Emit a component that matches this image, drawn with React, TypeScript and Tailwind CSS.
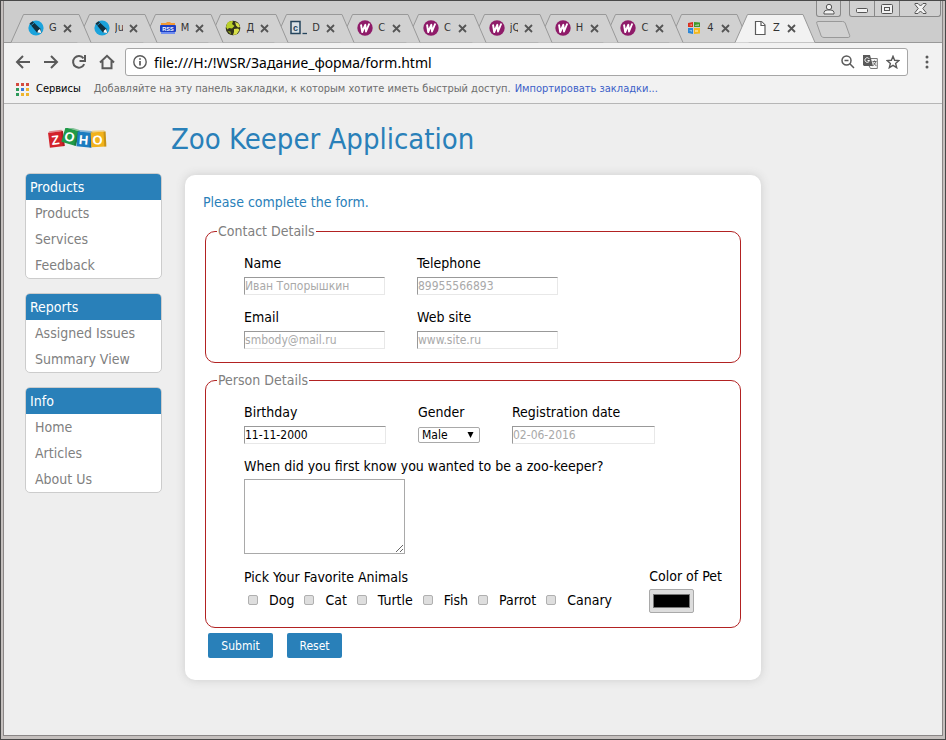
import type { ReactNode } from "react";

const CROSS = "M1 1L8 8M8 1L1 8";

function PenIcon() {
  return (
    <svg width="16" height="16" viewBox="0 0 16 16">
      <circle cx="8" cy="8" r="7.6" fill="#1ba3dc" />
      <path d="M1.5 3.6l3-2.4 8 7.6 1 4.2-4.600-.6z" fill="#12303f" />
      <path d="M10 10.600l2-1.600 1.300 3.900-3.900-.5z" fill="#fff" />
      <path d="M3.200 5.400l2.800-2.300" stroke="#1ba3dc" strokeWidth=".8" />
    </svg>
  );
}

function RssIcon() {
  return (
    <svg width="16" height="16" viewBox="0 0 16 16">
      <path d="M1 5V3h5l1-1h3l1 1h4v2z" fill="#f39a33" />
      <rect x="0" y="5" width="16" height="7" rx="1" fill="#1b3fc4" />
      <rect x="1" y="12" width="14" height="2" fill="#6f8df0" />
      <text x="8" y="10.600" textAnchor="middle" fontSize="5.500" fontWeight="700" fill="#fff" fontFamily="Liberation Sans">RSS</text>
    </svg>
  );
}

function GlobeIcon() {
  return (
    <svg width="16" height="16" viewBox="0 0 16 16">
      <circle cx="8" cy="8" r="7.300" fill="#33331c" />
      <path d="M2 3.500C4 1 7 .5 8 1.500L7 4 9.500 6 7 8.500 4 8 2.500 9.500 1 7z" fill="#b9cf2a" />
      <path d="M10 2l3.500 1.500L15 7l-2 .5-2-2zM9 9l4-.5 1.500 1.500-3 4.500L8 15l1-3z" fill="#d8e04a" />
      <path d="M2.500 11l3 .5.5 3z" fill="#8fa51e" />
    </svg>
  );
}

function CodeIcon() {
  return (
    <svg width="18" height="16" viewBox="0 0 18 16">
      <rect x="1" y="1.500" width="9" height="12" fill="#d9e1e6" stroke="#25445c" strokeWidth="1.500" />
      <text x="5.500" y="11" textAnchor="middle" fontSize="9" fontWeight="700" fill="#25445c" fontFamily="Liberation Sans">c</text>
      <path d="M12.500 13.500H17" stroke="#25445c" strokeWidth="1.300" />
    </svg>
  );
}

function WIcon() {
  return (
    <svg width="16" height="16" viewBox="0 0 16 16">
      <circle cx="8" cy="8" r="7.700" fill="#8f1b69" />
      <path d="M4 4.500L5.200 12 8.300 4.800 9 11.500 12.300 3.500" fill="none" stroke="#fff" strokeWidth="1.900" strokeLinejoin="round" />
    </svg>
  );
}

function SquaresIcon() {
  return (
    <svg width="14" height="14" viewBox="0 0 14 14">
      <path d="M1 2l5-1v5H1z" fill="#d9301f" />
      <path d="M7 1l6 .5V6H7z" fill="#3f9a2b" />
      <path d="M1 7h5v6l-5-1z" fill="#2c86d6" />
      <path d="M7 7h6v5.500L7 13z" fill="#f3b81d" />
      <path d="M2 4l3-1v2zM8 4l4-1v2H8zM2 9h3v2zM8 9h3v2H8z" fill="#fff" opacity=".45" />
    </svg>
  );
}

function FileIcon() {
  return (
    <svg width="16" height="16" viewBox="0 0 16 16" fill="#fff" stroke="#5a5a5a" strokeWidth="1.200">
      <path d="M3.500 1.500h6l3.500 3.500v9.500H3.500z" />
      <path d="M9 1.500v4h4" />
    </svg>
  );
}

const tabs: { label: string; icon: ReactNode; active?: boolean }[] = [
  { label: "G", icon: <PenIcon /> },
  { label: "Ju", icon: <PenIcon /> },
  { label: "M", icon: <RssIcon /> },
  { label: "Д", icon: <GlobeIcon /> },
  { label: "D", icon: <CodeIcon /> },
  { label: "C", icon: <WIcon /> },
  { label: "C", icon: <WIcon /> },
  { label: "jQ", icon: <WIcon /> },
  { label: "H", icon: <WIcon /> },
  { label: "C", icon: <WIcon /> },
  { label: "4", icon: <SquaresIcon /> },
  { label: "Z", icon: <FileIcon />, active: true },
];

function TabStrip() {
  return (
    <header className="relative flex h-[42px] items-end border-b border-[#999] bg-[#ccc] pr-[91px] pl-[7px]">
      <div className="flex h-7 min-w-0 flex-1">
        {tabs.map((tab, i) => (
          <div
            key={i}
            className="relative flex min-w-0 flex-1 items-center pl-4"
            style={{ zIndex: tab.active ? 20 : 12 - i }}
          >
            <svg className="absolute top-0 left-0 overflow-visible" width="80" height="29" viewBox="0 0 80 29">
              <path d="M0 28.500L12.500 .5H68L80 28.500" fill={tab.active ? "#f2f2f2" : "#d1d1d1"} stroke="#999" />
            </svg>
            <span className="relative flex w-[18px] shrink-0 justify-center">{tab.icon}</span>
            <span className="relative ml-1 w-2 shrink-0 overflow-hidden text-[11px] leading-4 whitespace-nowrap text-[#333]">
              {tab.label}
            </span>
            <button type="button" aria-label="Close tab" className="relative ml-[6px] shrink-0">
              <svg width="9" height="9" viewBox="0 0 9 9" stroke="#555" strokeWidth="1.800">
                <path d={CROSS} />
              </svg>
            </button>
          </div>
        ))}
      </div>
      <button type="button" aria-label="New tab" className="mb-1 ml-[15px]">
        <svg width="35" height="17" viewBox="0 0 35 17">
          <path d="M2 .5h24.500q2 0 2.700 1.500l4.500 12.500q.5 2-1.500 2H8q-2 0-2.800-1.500L.8 2.500Q0 .5 2 .5z" fill="#d1d1d1" stroke="#999" />
        </svg>
      </button>
      <div className="absolute top-0 right-px flex h-4 text-[#555]">
        <button type="button" aria-label="Profile" className="mr-2 flex w-[25px] items-center justify-center rounded-b-[3px] border border-t-0 border-[#888] bg-[#d0d0d0]">
          <svg width="12" height="12" viewBox="0 0 12 12" fill="#f2f2f2" stroke="#555">
            <path d="M1 11V9.500Q1 7.500 4 7h4q3 .5 3 2.500V11z" />
            <circle cx="6" cy="4" r="2.700" />
          </svg>
        </button>
        <div className="flex rounded-b-[3px] border border-t-0 border-[#888] bg-[#d0d0d0]">
          <button type="button" aria-label="Minimize" className="flex w-6 items-center justify-center">
            <svg width="12" height="10" viewBox="0 0 12 10" fill="#f2f2f2" stroke="#555">
              <rect x=".5" y="4.500" width="11" height="4" rx="1" />
            </svg>
          </button>
          <button type="button" aria-label="Maximize" className="flex w-[26px] items-center justify-center border-x border-[#888]">
            <svg width="12" height="10" viewBox="0 0 12 10" fill="#f2f2f2" stroke="#555">
              <rect x=".5" y=".5" width="11" height="9" rx="1" />
              <rect x="3.500" y="3.500" width="5" height="3" />
            </svg>
          </button>
          <button type="button" aria-label="Close" className="flex w-10 items-center justify-center">
            <svg width="13" height="11" viewBox="0 0 13 11" fill="#f2f2f2" stroke="#555">
              <path d="M1 .5h3l2.500 2.500L9 .5h3v1L8.800 5.500 12 9.500v1H9L6.500 8 4 10.500H1v-1L4.200 5.500 1 1.500z" />
            </svg>
          </button>
        </div>
      </div>
    </header>
  );
}

const navIcons = [
  { name: "Back", d: "M15 8H2M8 2L2 8l6 6" },
  { name: "Forward", d: "M1 8h13M8 2l6 6-6 6" },
  { name: "Reload", d: "M13.200 10.200A5.800 5.800 0 1 1 12.500 4.300M14 1v6H8.500" },
  { name: "Home", d: "M1 8.500L8 1.800l7 6.700M3.500 7v7.200h9V7" },
];

function Toolbar() {
  return (
    <div className="flex items-center bg-[#f2f2f2] pt-[5px] pr-[13px] pl-[11px]">
      <div className="flex shrink-0 gap-3">
        {navIcons.map((icon) => (
          <button key={icon.name} type="button" aria-label={icon.name}>
            <svg width="16" height="16" viewBox="0 0 16 16" fill="none" stroke="#5a5a5a" strokeWidth="2">
              <path d={icon.d} />
            </svg>
          </button>
        ))}
      </div>
      <div className="ml-[10px] flex h-7 min-w-0 flex-1 items-center rounded-[3px] border border-[#a6a6a6] bg-white px-[7px]">
        <svg width="14" height="14" viewBox="0 0 14 14" fill="none" stroke="#5a5a5a" strokeWidth="1.400">
          <circle cx="7" cy="7" r="6.200" />
          <path d="M7 6v4.500M7 3.300v1.500" strokeWidth="1.700" />
        </svg>
        <input
          aria-label="Address"
          defaultValue="file:///H:/!WSR/Задание_форма/form.html"
          className="ml-[7px] min-w-0 flex-1 bg-transparent font-['Noto_Sans',sans-serif] text-[14px] text-black outline-none"
        />
        <div className="flex items-center gap-2">
          <svg width="14" height="14" viewBox="0 0 14 14" fill="none" stroke="#5a5a5a" strokeWidth="1.500">
            <circle cx="5.500" cy="5.500" r="4.500" />
            <path d="M8.800 8.800L13 13M3.500 5.500h4" />
          </svg>
          <svg width="15" height="14" viewBox="0 0 15 14">
            <path d="M6 3.500h8.300v10H7.500L5 9z" fill="#f7f7f7" stroke="#777" />
            <path d="M0 0h7l3 11H1L0 10z" fill="#5a5a5a" />
            <path d="M6.200 3.800A2.300 2.300 0 1 0 6.500 5.500H4.500" fill="none" stroke="#fff" />
            <path d="M9.500 6.500h4M11.500 5.500v1M12.800 6.500q-.8 3-3 4.300M10.300 7.500l3 3.500" fill="none" stroke="#5a5a5a" strokeWidth=".9" />
          </svg>
          <svg width="14" height="14" viewBox="0 0 14 14" fill="none" stroke="#5a5a5a" strokeWidth="1.400">
            <path d="M7 1.300l1.600 4 4.300.3-3.300 2.800 1.100 4.300L7 10.400l-3.700 2.300 1.100-4.300L1.100 5.600l4.300-.3z" />
          </svg>
        </div>
      </div>
      <button type="button" aria-label="Menu" className="ml-[17px]">
        <svg width="4" height="14" viewBox="0 0 4 14" fill="#5a5a5a">
          <circle cx="2" cy="2" r="1.500" />
          <circle cx="2" cy="7" r="1.500" />
          <circle cx="2" cy="12" r="1.500" />
        </svg>
      </button>
    </div>
  );
}

const dots = ["#d44b3f", "#d44b3f", "#d44b3f", "#2e9a5b", "#3b78d8", "#eeb52e", "#2e9a5b", "#eeb52e", "#eeb52e"];

function BookmarksBar() {
  return (
    <div className="flex h-7 items-center border-b border-[#b6b6b6] bg-[#f2f2f2] pl-3 text-[11px] whitespace-nowrap">
      <svg width="13" height="13" viewBox="0 0 13 13">
        {dots.map((color, i) => (
          <rect key={i} x={(i % 3) * 5} y={Math.floor(i / 3) * 5} width="3" height="3" fill={color} />
        ))}
      </svg>
      <span className="ml-[7px] text-black">Сервисы</span>
      <span className="ml-[13px] text-[#6e6e6e]">
        Добавляйте на эту панель закладки, к которым хотите иметь быстрый доступ.
      </span>
      <a href="#import" className="ml-1 text-[#3c5fc8]">
        Импортировать закладки...
      </a>
    </div>
  );
}

function Logo() {
  const tiles = [
    { ch: "Z", x: 8, y: 12, fill: "#d3222a", turn: -7 },
    { ch: "O", x: 22, y: 9, fill: "#1f9a48", turn: 16 },
    { ch: "H", x: 36, y: 12, fill: "#1c7cc0", turn: 5 },
    { ch: "O", x: 50, y: 12, fill: "#f2b21b", turn: -3 },
  ];
  return (
    <svg width="59" height="21" viewBox="0 0 59 21" role="img" aria-label="Zoho">
      {tiles.map((t, i) => (
        <g key={i} transform={`translate(${t.x} ${t.y}) rotate(${t.turn})`}>
          <rect x="-7" y="-8" width="15" height="15" fill={t.fill} />
          <path d="M-7-8h15l-1.500-1.500h-12z" fill={t.fill} opacity=".5" />
          <path d="M6-8h2v15H6z" fill="#000" opacity=".18" />
          <text x="-.5" y="4.500" textAnchor="middle" fontSize="13" fontWeight="700" fill="#fff" fontFamily="Liberation Sans">{t.ch}</text>
        </g>
      ))}
    </svg>
  );
}

const menus = [
  { title: "Products", links: ["Products", "Services", "Feedback"] },
  { title: "Reports", links: ["Assigned Issues", "Summary View"] },
  { title: "Info", links: ["Home", "Articles", "About Us"] },
];

function Sidebar() {
  return (
    <nav className="flex w-[137px] shrink-0 flex-col gap-[14px]">
      {menus.map((menu) => (
        <section key={menu.title} className="overflow-hidden rounded-[5px] border border-[#ccc] bg-white">
          <h2 className="bg-[#2980b9] pl-1 leading-[26px] text-white">{menu.title}</h2>
          <ul>
            {menu.links.map((link) => (
              <li key={link}>
                <a href={`#${link}`} className="block pl-[9px] leading-[26px] text-[#808080]">
                  {link}
                </a>
              </li>
            ))}
          </ul>
        </section>
      ))}
    </nav>
  );
}

function Field({ id, label, width, placeholder, value }: {
  id: string; label: string; width: string; placeholder?: string; value?: string;
}) {
  return (
    <div className={`flex flex-col gap-1 ${width}`}>
      <label htmlFor={id}>{label}</label>
      <input
        id={id}
        defaultValue={value}
        placeholder={placeholder}
        className="h-[18px] w-full border border-[#e8e8e8] border-t-[#999] border-l-[#999] bg-white text-[12px] leading-4 outline-none placeholder:text-[#a9a9a9]"
      />
    </div>
  );
}

const fieldset = "mx-0.5 rounded-[10px] border border-[#b22222] pl-[38px]";
const legend = "-ml-[27px] px-px leading-5 text-[#808080]";
const formButton = "h-[25px] rounded-[2px] bg-[#2980b9] text-[12px] text-white";

function KeeperForm() {
  return (
    <form className="mt-0.5 w-full max-w-[576px] rounded-[10px] bg-white px-[18px] pt-[17px] pb-[22px] leading-5 text-black shadow-[0_0_10px_#ccc]">
      <p className="mb-[9px] text-[#2980b9]">Please complete the form.</p>

      <fieldset className={`${fieldset} pb-[13px]`}>
        <legend className={legend}>Contact Details</legend>
        <div className="flex flex-col gap-3 pt-3">
          <div className="flex gap-8">
            <Field id="name" label="Name" width="w-[141px]" placeholder="Иван Топорышкин" />
            <Field id="phone" label="Telephone" width="w-[141px]" placeholder="89955566893" />
          </div>
          <div className="flex gap-8">
            <Field id="email" label="Email" width="w-[141px]" placeholder="smbody@mail.ru" />
            <Field id="site" label="Web site" width="w-[141px]" placeholder="www.site.ru" />
          </div>
        </div>
      </fieldset>

      <fieldset className={`${fieldset} mt-[7px] pr-[18px] pb-[14px]`}>
        <legend className={legend}>Person Details</legend>
        <div className="flex gap-8 pt-3">
          <Field id="birthday" label="Birthday" width="w-[142px]" value="11-11-2000" />
          <div className="flex w-[62px] flex-col gap-[5px]">
            <label htmlFor="gender">Gender</label>
            <div className="relative">
              <select
                id="gender"
                className="block h-4 w-full appearance-none rounded-[2px] border border-[#a9a9a9] bg-white pl-[3px] text-[12px] leading-[14px] outline-none"
              >
                <option>Male</option>
                <option>Female</option>
              </select>
              <svg className="pointer-events-none absolute top-[5px] right-[6px]" width="7" height="6" viewBox="0 0 7 6">
                <path d="M.5 0h6l-3 6z" />
              </svg>
            </div>
          </div>
          <Field id="registered" label="Registration date" width="w-[143px]" placeholder="02-06-2016" />
        </div>
        <div className="mt-3 flex flex-col gap-[3px]">
          <label htmlFor="story">When did you first know you wanted to be a zoo-keeper?</label>
          <textarea id="story" className="block h-[75px] w-[161px] border border-[#a9a9a9] bg-white outline-none" />
        </div>
        <div className="mt-3 flex justify-between">
          <div role="group" aria-labelledby="animals" className="flex flex-col gap-[3px] pt-px">
            <span id="animals">Pick Your Favorite Animals</span>
            <div className="flex gap-[10px] pl-1">
              {["Dog", "Cat", "Turtle", "Fish", "Parrot", "Canary"].map((animal) => (
                <label key={animal} className="flex items-center gap-[11px]">
                  <input
                    type="checkbox"
                    className="h-[10px] w-[10px] appearance-none rounded-[2px] border border-[#b0b0b0] bg-[#dedede]"
                  />
                  {animal}
                </label>
              ))}
            </div>
          </div>
          <div className="flex flex-col gap-[3px]">
            <label htmlFor="color">Color of Pet</label>
            <input
              id="color"
              type="color"
              defaultValue="#000000"
              className="block h-6 w-[45px] appearance-none rounded-[2px] border border-[#a9a9a9] bg-[#ddd] px-[3px] py-1 [&::-webkit-color-swatch]:border-[#777] [&::-webkit-color-swatch-wrapper]:p-0"
            />
          </div>
        </div>
      </fieldset>

      <div className="mt-[5px] ml-[5px] flex gap-[14px]">
        <button type="submit" className={`${formButton} w-[65px]`}>Submit</button>
        <button type="reset" className={`${formButton} w-[55px]`}>Reset</button>
      </div>
    </form>
  );
}

export default function App() {
  return (
    <div className="flex min-h-screen flex-col border border-[#484848] bg-[#c4bfbd] p-0.5 pt-0 font-['DejaVu_Sans_Condensed','DejaVu_Sans',sans-serif] text-[14px]">
      <div className="mb-px flex flex-1 flex-col border border-t-0 border-[#8a8686] bg-[#eee]">
        <TabStrip />
        <Toolbar />
        <BookmarksBar />
        <main className="flex-1 pl-[21px]">
          <div className="flex h-[69px] items-center pl-[23px]">
            <Logo />
            <h1 className="ml-16 text-[29px] leading-9 text-[#2980b9]">Zoo Keeper Application</h1>
          </div>
          <div className="flex items-start gap-[23px]">
            <Sidebar />
            <KeeperForm />
          </div>
        </main>
      </div>
    </div>
  );
}
